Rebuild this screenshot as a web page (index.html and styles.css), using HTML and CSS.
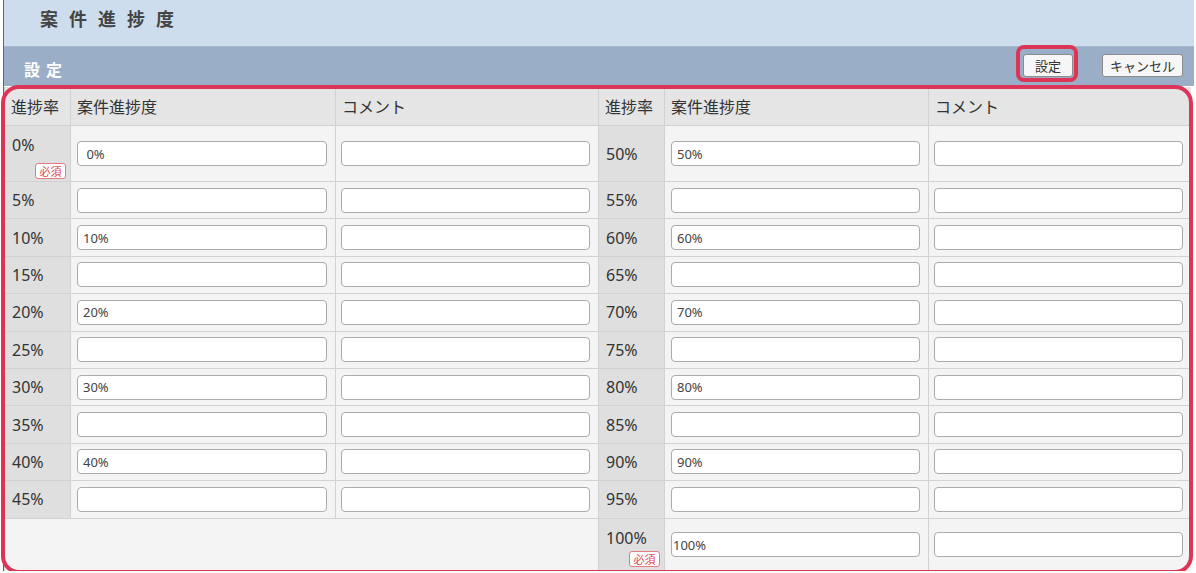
FILE: index.html
```html
<!DOCTYPE html>
<html lang="ja">
<head>
  <meta charset="UTF-8" />
  <title>案件進捗度</title>
  <link rel="stylesheet" href="styles.css">
</head>
<body>
  <div class="page">
    <div class="title-bar">
      <h1>案件進捗度</h1>
    </div>
    <div class="section-bar">
      <h2>設定</h2>
      <div class="actions">
        <span class="mark-btn"><button class="btn btn-ok">設定</button></span>
        <button class="btn">キャンセル</button>
      </div>
    </div>
    <div class="grid-wrap">
      <table class="grid">
        <colgroup>
          <col class="c-rate"><col class="c-name-l"><col class="c-note-l">
          <col class="c-rate"><col class="c-name-r"><col class="c-note-r">
        </colgroup>
        <thead>
          <tr>
            <th>進捗率</th><th>案件進捗度</th><th>コメント</th>
            <th>進捗率</th><th>案件進捗度</th><th>コメント</th>
          </tr>
        </thead>
        <tbody>
          <tr class="tall">
            <td class="rate top"><div class="rate-box">0%<span class="req">必須</span></div></td>
            <td class="name"><input type="text" value=" 0%"></td>
            <td class="note"><input type="text"></td>
            <td class="rate">50%</td>
            <td class="name"><input type="text" value="50%"></td>
            <td class="note"><input type="text"></td>
          </tr>
          <tr>
            <td class="rate">5%</td>
            <td class="name"><input type="text"></td>
            <td class="note"><input type="text"></td>
            <td class="rate">55%</td>
            <td class="name"><input type="text"></td>
            <td class="note"><input type="text"></td>
          </tr>
          <tr>
            <td class="rate">10%</td>
            <td class="name"><input type="text" value="10%"></td>
            <td class="note"><input type="text"></td>
            <td class="rate">60%</td>
            <td class="name"><input type="text" value="60%"></td>
            <td class="note"><input type="text"></td>
          </tr>
          <tr>
            <td class="rate">15%</td>
            <td class="name"><input type="text"></td>
            <td class="note"><input type="text"></td>
            <td class="rate">65%</td>
            <td class="name"><input type="text"></td>
            <td class="note"><input type="text"></td>
          </tr>
          <tr>
            <td class="rate">20%</td>
            <td class="name"><input type="text" value="20%"></td>
            <td class="note"><input type="text"></td>
            <td class="rate">70%</td>
            <td class="name"><input type="text" value="70%"></td>
            <td class="note"><input type="text"></td>
          </tr>
          <tr>
            <td class="rate">25%</td>
            <td class="name"><input type="text"></td>
            <td class="note"><input type="text"></td>
            <td class="rate">75%</td>
            <td class="name"><input type="text"></td>
            <td class="note"><input type="text"></td>
          </tr>
          <tr>
            <td class="rate">30%</td>
            <td class="name"><input type="text" value="30%"></td>
            <td class="note"><input type="text"></td>
            <td class="rate">80%</td>
            <td class="name"><input type="text" value="80%"></td>
            <td class="note"><input type="text"></td>
          </tr>
          <tr>
            <td class="rate">35%</td>
            <td class="name"><input type="text"></td>
            <td class="note"><input type="text"></td>
            <td class="rate">85%</td>
            <td class="name"><input type="text"></td>
            <td class="note"><input type="text"></td>
          </tr>
          <tr>
            <td class="rate">40%</td>
            <td class="name"><input type="text" value="40%"></td>
            <td class="note"><input type="text"></td>
            <td class="rate">90%</td>
            <td class="name"><input type="text" value="90%"></td>
            <td class="note"><input type="text"></td>
          </tr>
          <tr>
            <td class="rate">45%</td>
            <td class="name"><input type="text"></td>
            <td class="note"><input type="text"></td>
            <td class="rate">95%</td>
            <td class="name"><input type="text"></td>
            <td class="note"><input type="text"></td>
          </tr>
          <tr class="last">
            <td class="blank" colspan="3"></td>
            <td class="rate top"><div class="rate-box short">100%<span class="req">必須</span></div></td>
            <td class="name"><input class="tight" type="text" value="100%"></td>
            <td class="note"><input type="text"></td>
          </tr>
        </tbody>
      </table>
    </div>
  </div>
</body>
</html>
```

FILE: styles.css
```css
body {
  margin: 0;
  background: #fff;
  font-family: "Noto Sans", "Noto Sans CJK JP", sans-serif;
  color: #333;
}
.page {
  margin-left: 3px;
  width: 1190px;
  border-left: 1px solid #666;
}
.title-bar {
  height: 46px;
  background: #cedded;
  border-bottom: 1px solid #a9b9cc;
  display: flex;
  align-items: center;
}
.title-bar h1 {
  margin: 0 0 10px 36px;
  font-size: 18px;
  font-weight: bold;
  letter-spacing: 11px;
  color: #444;
}
.section-bar {
  height: 39px;
  background: #9aaec7;
  display: flex;
  align-items: center;
  justify-content: space-between;
}
.section-bar h2 {
  margin: 4px 0 0 20px;
  font-size: 16px;
  font-weight: bold;
  letter-spacing: 6px;
  color: #fff;
}
.actions {
  display: flex;
  align-items: center;
  gap: 29px;
  margin: 0 11px 2px 0;
}
.mark-btn {
  position: relative;
  display: flex;
}
.mark-btn::after {
  content: "";
  position: absolute;
  left: -7px;
  right: -5px;
  top: -9px;
  bottom: -5px;
  border: 4px solid #dc3558;
  border-radius: 8px;
}
.btn {
  display: block;
  height: 23px;
  padding: 0 7px;
  font-family: "Noto Sans CJK JP", sans-serif;
  font-size: 13px;
  color: #333;
  background: #f6f6f6;
  border: 1px solid #8c8c8c;
  border-radius: 3px;
  line-height: 19px;
}
.btn-ok {
  padding: 0 11px;
}
.grid-wrap {
  position: relative;
  width: 1186px;
  margin-top: 1px;
}
.grid-wrap::after {
  content: "";
  position: absolute;
  left: -3px;
  right: -3px;
  top: -2px;
  bottom: -3px;
  border: 4px solid #dc3558;
  border-radius: 18px;
  pointer-events: none;
}
.grid {
  width: 1186px;
  table-layout: fixed;
  border-collapse: collapse;
}
.c-rate { width: 66px; }
.c-name-l { width: 265px; }
.c-note-l { width: 263px; }
.c-name-r { width: 264px; }
.c-note-r { width: 262px; }
.grid th {
  height: 38px;
  padding: 0 0 0 6px;
  background: #e5e5e5;
  border-left: 1px solid #d2d2d2;
  border-bottom: 1px solid #d2d2d2;
  font-family: "Noto Sans CJK JP", sans-serif;
  font-size: 16px;
  font-weight: normal;
  text-align: left;
  color: #333;
}
.grid td {
  height: 36.4px;
  padding: 0;
  border-left: 1px solid #d2d2d2;
  border-bottom: 1px solid #d2d2d2;
  background: #f4f4f4;
  font-size: 16px;
}
.grid tr.tall td { height: 55px; }
.grid tr.last td { height: 52px; border-bottom: none; }
.grid td.rate {
  padding-left: 7px;
  background: #dfdfdf;
  color: #333;
}
.grid td.rate.top {
  height: auto;
  vertical-align: top;
  padding-top: 8px;
}
.rate-box {
  height: 44px;
  line-height: 22px;
}
.rate-box.short {
  height: 36px;
}
.req {
  display: block;
  width: 29px;
  margin: 7px 4px 0 auto;
  font-family: "Noto Sans CJK JP", sans-serif;
  font-size: 11px;
  line-height: 14px;
  text-align: center;
  color: #e0454f;
  background: #fff;
  border: 1px solid #e6787f;
  border-radius: 3px;
}
.rate-box.short .req {
  margin-top: 2px;
}
.grid td.name { padding: 0 8px 0 6px; }
.grid td.note { padding: 0 8px 0 5px; }
.grid td.blank { background: #f4f4f4; }
.grid input {
  box-sizing: border-box;
  width: 100%;
  height: 25px;
  padding: 0 5px;
  font-family: "Noto Sans", sans-serif;
  font-size: 13px;
  color: #444;
  background: #fff;
  border: 1px solid #ababab;
  border-radius: 4px;
}
.grid input.tight { padding-left: 1px; }
```
